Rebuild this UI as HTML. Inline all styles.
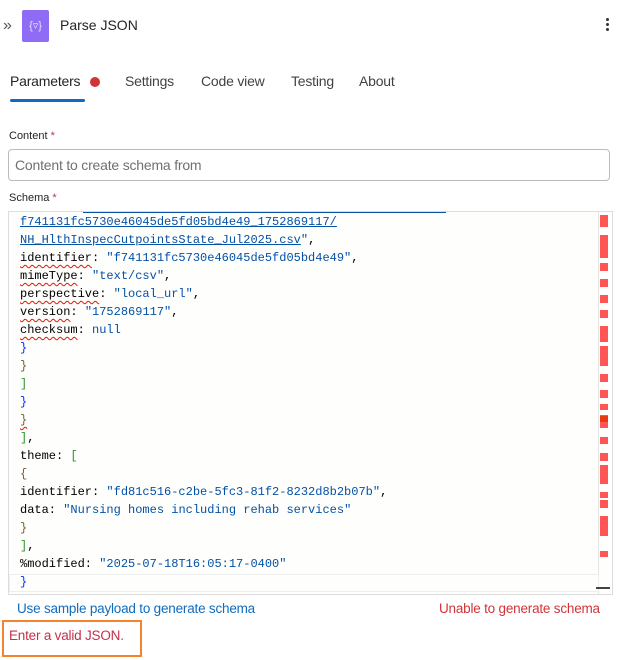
<!DOCTYPE html>
<html><head><meta charset="utf-8"><style>
body{margin:0;width:623px;height:660px;background:#fff;font-family:"Liberation Sans",sans-serif;position:relative;overflow:hidden;color:#242424}
.a{position:absolute}
.code{position:absolute;left:20px;font-family:"Liberation Mono",monospace;font-size:12px;line-height:18px;white-space:pre;color:#000}
.s{color:#0451a5}.b{color:#0431fa}.o{color:#795e26}.g{color:#319331}
.w{text-decoration:underline wavy #e51400;text-decoration-thickness:1px;text-underline-offset:3px}
.u{text-decoration:underline;text-decoration-color:#0451a5}
.m{position:absolute;left:600px;width:8px;background:#ff5555}
</style></head><body>
<div class="a" style="left:3px;top:17px;font-size:16px;color:#555">»</div>
<div class="a" style="left:22px;top:10px;width:27px;height:32px;background:#8f6cf5;border-radius:2px;color:#e8e0ff;font-size:11px;text-align:center;line-height:32px">{▿}</div>
<div class="a" style="left:60px;top:17px;font-size:14px;color:#242424">Parse JSON</div>
<div class="a" style="left:606px;top:18px;width:3px;height:3px;background:#333;border-radius:50%;box-shadow:0 5px 0 #333,0 10px 0 #333"></div>
<div class="a" style="left:10px;top:73px;font-size:14px;color:#242424;letter-spacing:-0.2px">Parameters</div>
<div class="a" style="left:90px;top:77px;width:10px;height:10px;border-radius:50%;background:#d13438"></div>
<div class="a" style="left:10px;top:99px;width:75px;height:3px;background:#0f6cbd;border-radius:2px"></div>
<div class="a" style="left:125px;top:73px;font-size:14px;color:#424242;letter-spacing:-0.2px">Settings</div>
<div class="a" style="left:201px;top:73px;font-size:14px;color:#424242;letter-spacing:-0.2px">Code view</div>
<div class="a" style="left:291px;top:73px;font-size:14px;color:#424242;letter-spacing:-0.2px">Testing</div>
<div class="a" style="left:359px;top:73px;font-size:14px;color:#424242;letter-spacing:-0.2px">About</div>
<div class="a" style="left:9px;top:130px;font-size:11px">Content <span style="color:#c4314b">*</span></div>
<div class="a" style="left:8px;top:149px;width:600px;height:30px;border:1px solid #bbb;border-radius:4px"></div>
<div class="a" style="left:15px;top:157px;font-size:14px;color:#707070;letter-spacing:-0.2px">Content to create schema from</div>
<div class="a" style="left:9px;top:192px;font-size:11px">Schema <span style="color:#c4314b">*</span></div>
<div class="a" style="left:8px;top:211px;width:603px;height:382px;border:1px solid #ddd;background:#fefefd;overflow:hidden">
<div class="a" style="left:74px;top:0;width:363px;border-top:1px solid #0451a5"></div>
<div class="a" style="left:589px;top:0;width:1px;height:382px;background:#e5e5e5"></div>
<div class="a" style="left:0;top:362px;width:590px;height:18px;border:1px solid #eee;box-sizing:border-box"></div>
<div class="a" style="left:587px;top:375px;width:14px;height:2px;background:#444"></div>
</div>
<div class="code" style="top:213px"><span class="s u">f741131fc5730e46045de5fd05bd4e49_1752869117/</span>
<span class="s"><span class="u">NH_HlthInspecCutpointsState_Jul2025.csv</span>"</span>,
<span class="w">identifier</span>: <span class="s">"f741131fc5730e46045de5fd05bd4e49"</span>,
<span class="w">mimeType</span>: <span class="s">"text/csv"</span>,
<span class="w">perspective</span>: <span class="s">"local_url"</span>,
<span class="w">version</span>: <span class="s">"1752869117"</span>,
<span class="w">checksum</span>: <span class="s">null</span>
<span class="b">}</span>
<span class="o">}</span>
<span class="g">]</span>
<span class="b">}</span>
<span class="o w">}</span>
<span class="g">]</span>,
theme: <span class="g">[</span>
<span class="o">{</span>
identifier: <span class="s">"fd81c516-c2be-5fc3-81f2-8232d8b2b07b"</span>,
data: <span class="s">"Nursing homes including rehab services"</span>
<span class="o">}</span>
<span class="g">]</span>,
%modified: <span class="s">"2025-07-18T16:05:17-0400"</span>
<span class="b">}</span></div>
<div class="m" style="top:215px;height:12px"></div><div class="m" style="top:235px;height:23px"></div>
<div class="m" style="top:263px;height:8px"></div><div class="m" style="top:279px;height:8px"></div>
<div class="m" style="top:295px;height:8px"></div><div class="m" style="top:310px;height:8px"></div>
<div class="m" style="top:326px;height:16px"></div><div class="m" style="top:346px;height:20px"></div>
<div class="m" style="top:374px;height:8px"></div><div class="m" style="top:390px;height:8px"></div>
<div class="m" style="top:404px;height:6px"></div><div class="m" style="top:415px;height:13px"></div>
<div class="m" style="top:416px;height:6px;background:#e83a10"></div>
<div class="m" style="top:437px;height:7px"></div><div class="m" style="top:453px;height:8px"></div>
<div class="m" style="top:465px;height:19px"></div><div class="m" style="top:492px;height:6px"></div>
<div class="m" style="top:500px;height:8px"></div><div class="m" style="top:516px;height:20px"></div>
<div class="m" style="top:551px;height:6px"></div>
<div class="a" style="left:17px;top:601px;font-size:13.5px;color:#0f6cbd;letter-spacing:-0.2px">Use sample payload to generate schema</div>
<div class="a" style="left:439px;top:601px;font-size:13.5px;color:#d13438;white-space:nowrap;letter-spacing:-0.2px">Unable to generate schema</div>
<div class="a" style="left:2px;top:620px;width:136px;height:33px;border:2px solid #f4832b"></div>
<div class="a" style="left:9px;top:628px;font-size:13.5px;color:#c4314b;letter-spacing:-0.2px">Enter a valid JSON.</div>
</body></html>
